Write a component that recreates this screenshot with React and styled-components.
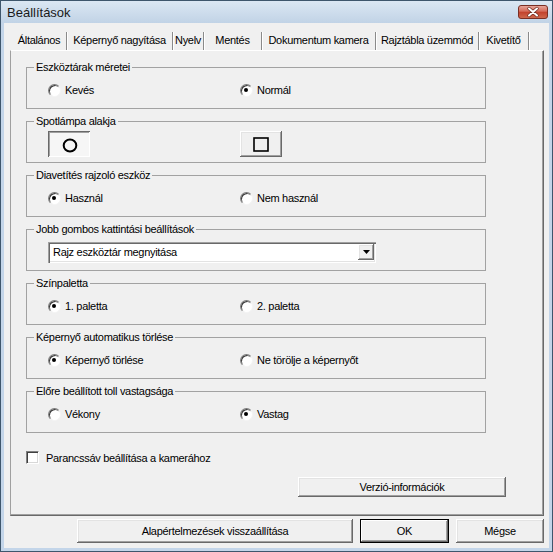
import React from "react";
import styled, { createGlobalStyle } from "styled-components";

const GlobalStyle = createGlobalStyle`
  html, body {
    margin: 0;
    padding: 0;
    background: #f0f0f0;
  }
  body {
    font-family: "Liberation Sans", Arial, sans-serif;
    font-size: 11px;
    letter-spacing: -0.3px;
    color: #000;
  }
`;

const Window = styled.div`
  width: 553px;
  height: 552px;
  box-sizing: border-box;
  border: 1px solid #3e566c;
  background: #c3d5e9;
  display: flex;
  flex-direction: column;
`;

const TitleBar = styled.div`
  height: 22px;
  flex: none;
  display: flex;
  align-items: center;
  justify-content: space-between;
  padding: 0 4px 0 6px;
  background: linear-gradient(#dbe7f3, #c1d3e6);
`;

const Title = styled.span`
  font-size: 13px;
  letter-spacing: 0;
  color: #1a1a1a;
`;

const Body = styled.div`
  flex: 1;
  margin: 0 3px 3px;
  padding-top: 7px;
  background: #f0f0f0;
  display: flex;
  flex-direction: column;
`;

const TabRow = styled.div`
  display: flex;
  height: 20px;
  padding-left: 8px;
`;

const Tab = styled.div`
  width: ${(p) => p.$w}px;
  box-sizing: border-box;
  display: flex;
  align-items: center;
  justify-content: center;
  border-right: 1px solid #8a8a8a;
  box-shadow: 1px 0 0 #fff;
  margin-top: 2px;
  padding-bottom: 3px;
  white-space: nowrap;
`;

const Panel = styled.div`
  height: 466px;
  box-sizing: border-box;
  margin: 0 5px 0 6px;
  border-top: 1px solid #fff;
  border-left: 1px solid #a0a0a0;
  border-right: 1px solid #696969;
  border-bottom: 1px solid #696969;
  box-shadow: inset -1px -1px 0 #a0a0a0;
  padding: 16px 0 0 15px;
  display: flex;
  flex-direction: column;
`;

const GroupStack = styled.div`
  display: flex;
  flex-direction: column;
  gap: 12px;
`;

const Group = styled.div`
  position: relative;
  width: 460px;
  height: 42px;
  box-sizing: border-box;
  border: 1px solid #a2a2a2;
`;

const Caption = styled.span`
  position: absolute;
  top: -7px;
  left: 7px;
  padding: 0 2px;
  line-height: 13px;
  background: #f0f0f0;
  white-space: nowrap;
`;

const Row = styled.div`
  height: 100%;
  box-sizing: border-box;
  padding: 4px 0 0 21px;
  display: grid;
  grid-template-columns: 192px 1fr;
  align-items: center;
`;

const Option = styled.label`
  display: flex;
  align-items: center;
  gap: 4px;
  white-space: nowrap;
`;

const RadioMark = styled.span`
  position: relative;
  width: 13px;
  height: 13px;
  box-sizing: border-box;
  border-radius: 50%;
  border: 1px solid;
  border-color: #7c7c7c #f4f4f4 #f4f4f4 #7c7c7c;
  box-shadow: inset 1px 1px 0 #3a3a3a;
  background: #fff;
  flex: none;

  &::after {
    content: "";
    display: ${(p) => (p.$on ? "block" : "none")};
    position: absolute;
    left: 3px;
    top: 3px;
    width: 4px;
    height: 4px;
    border-radius: 50%;
    background: #000;
  }
`;

const CheckRow = styled.label`
  margin-top: 18px;
  display: flex;
  align-items: center;
  gap: 7px;
  height: 13px;
`;

const CheckMark = styled.span`
  width: 13px;
  height: 13px;
  box-sizing: border-box;
  border: 1px solid;
  border-color: #808080 #fff #fff #808080;
  box-shadow: inset 1px 1px 0 #404040, inset -1px -1px 0 #d8d8d8;
  background: #fff;
  flex: none;
`;

const raised = `
  background: #f0f0f0;
  border: none;
  box-shadow: inset -1px -1px 0 #696969, inset 1px 1px 0 #fff,
    inset -2px -2px 0 #a0a0a0, inset 2px 2px 0 #e3e3e3;
`;

const Button = styled.button`
  ${raised}
  width: ${(p) => p.$w}px;
  height: ${(p) => p.$h || 24}px;
  padding: 0;
  font-family: inherit;
  font-size: 11px;
  letter-spacing: -0.3px;
  color: #000;
  flex: none;
  ${(p) =>
    p.$default &&
    `
    outline: 1px solid #000;
    outline-offset: -1px;
    box-shadow: inset -2px -2px 0 #696969, inset 2px 2px 0 #fff,
      inset -3px -3px 0 #a0a0a0;
  `}
`;

const ShapeButton = styled.button`
  width: 42px;
  height: 26px;
  padding: 0;
  display: flex;
  align-items: center;
  justify-content: center;
  border: none;
  ${(p) =>
    p.$pressed
      ? `
    background: #f6f6f6;
    box-shadow: inset 1px 1px 0 #696969, inset -1px -1px 0 #fff,
      inset 2px 2px 0 #a0a0a0;
    padding: 2px 0 0 2px;
  `
      : raised}
`;

const Select = styled.div`
  width: 328px;
  height: 21px;
  box-sizing: border-box;
  display: flex;
  align-items: center;
  justify-content: space-between;
  padding: 0 2px 0 5px;
  background: #fff;
  box-shadow: inset 1px 1px 0 #a0a0a0, inset 2px 2px 0 #696969,
    inset -1px -1px 0 #fff, inset -2px -2px 0 #e3e3e3;
`;

const DropButton = styled.span`
  ${raised}
  width: 16px;
  height: 16px;
  display: flex;
  align-items: center;
  justify-content: center;
`;

const VersionButton = styled(Button)`
  margin: 13px 0 0 272px;
`;

const Footer = styled.div`
  display: flex;
  justify-content: flex-end;
  gap: 7px;
  padding: 3px 5px 0 0;
`;

const tabs = [
  ["Általános", 55],
  ["Képernyő nagyítása", 106],
  ["Nyelv", 31],
  ["Mentés", 58],
  ["Dokumentum kamera", 114],
  ["Rajztábla üzemmód", 103],
  ["Kivetítő", 50],
];

const radioGroups = [
  ["Eszköztárak méretei", "Kevés", "Normál", 1],
  ["Spotlámpa alakja"],
  ["Diavetítés rajzoló eszköz", "Használ", "Nem használ", 0],
  ["Jobb gombos kattintási beállítások"],
  ["Színpaletta", "1. paletta", "2. paletta", 0],
  ["Képernyő automatikus törlése", "Képernyő törlése", "Ne törölje a képernyőt", 0],
  ["Előre beállított toll vastagsága", "Vékony", "Vastag", 1],
];

function CloseIcon() {
  return (
    <svg width="30" height="14" viewBox="0 0 30 14">
      <defs>
        <linearGradient id="cl" x1="0" y1="0" x2="0" y2="1">
          <stop offset="0" stopColor="#e8aaa0" />
          <stop offset="0.45" stopColor="#d46a58" />
          <stop offset="0.5" stopColor="#c2412c" />
          <stop offset="1" stopColor="#cf6a4e" />
        </linearGradient>
      </defs>
      <rect x="0.5" y="0.5" width="29" height="13" rx="2.5" fill="url(#cl)" stroke="#7a2f24" />
      <path d="M11 3.5 L19 10.5 M19 3.5 L11 10.5" stroke="#6b2a20" strokeWidth="3.4" strokeLinecap="round" />
      <path d="M11 3.5 L19 10.5 M19 3.5 L11 10.5" stroke="#fff" strokeWidth="2" strokeLinecap="round" />
    </svg>
  );
}

function Radio({ label, on }) {
  return (
    <Option>
      <RadioMark $on={on} />
      {label}
    </Option>
  );
}

function GroupContent({ index, a, b, sel }) {
  if (index === 1) {
    return (
      <Row>
        <ShapeButton $pressed>
          <svg width="16" height="15" viewBox="0 0 16 15">
            <ellipse cx="8" cy="7.5" rx="6.3" ry="6" fill="none" stroke="#000" strokeWidth="2" />
          </svg>
        </ShapeButton>
        <ShapeButton>
          <svg width="16" height="15" viewBox="0 0 16 15">
            <rect x="1" y="1" width="14" height="13" fill="none" stroke="#000" strokeWidth="1.6" />
          </svg>
        </ShapeButton>
      </Row>
    );
  }
  if (index === 3) {
    return (
      <Row>
        <Select>
          <span>Rajz eszköztár megnyitása</span>
          <DropButton>
            <svg width="7" height="4" viewBox="0 0 7 4">
              <path d="M0 0 H7 L3.5 4 Z" fill="#000" />
            </svg>
          </DropButton>
        </Select>
      </Row>
    );
  }
  return (
    <Row>
      <Radio label={a} on={sel === 0} />
      <Radio label={b} on={sel === 1} />
    </Row>
  );
}

export default function App() {
  return (
    <>
      <GlobalStyle />
      <Window>
        <TitleBar>
          <Title>Beállítások</Title>
          <CloseIcon />
        </TitleBar>
        <Body>
          <TabRow>
            {tabs.map(([name, w]) => (
              <Tab key={name} $w={w}>
                {name}
              </Tab>
            ))}
          </TabRow>
          <Panel>
            <GroupStack>
              {radioGroups.map(([title, a, b, sel], i) => (
                <Group key={title}>
                  <Caption>{title}</Caption>
                  <GroupContent index={i} a={a} b={b} sel={sel} />
                </Group>
              ))}
            </GroupStack>
            <CheckRow>
              <CheckMark />
              Parancssáv beállítása a kamerához
            </CheckRow>
            <VersionButton $w={208} $h={20}>
              Verzió-információk
            </VersionButton>
          </Panel>
          <Footer>
            <Button $w={276}>Alapértelmezések visszaállítása</Button>
            <Button $w={89} $default>
              OK
            </Button>
            <Button $w={88}>Mégse</Button>
          </Footer>
        </Body>
      </Window>
    </>
  );
}
